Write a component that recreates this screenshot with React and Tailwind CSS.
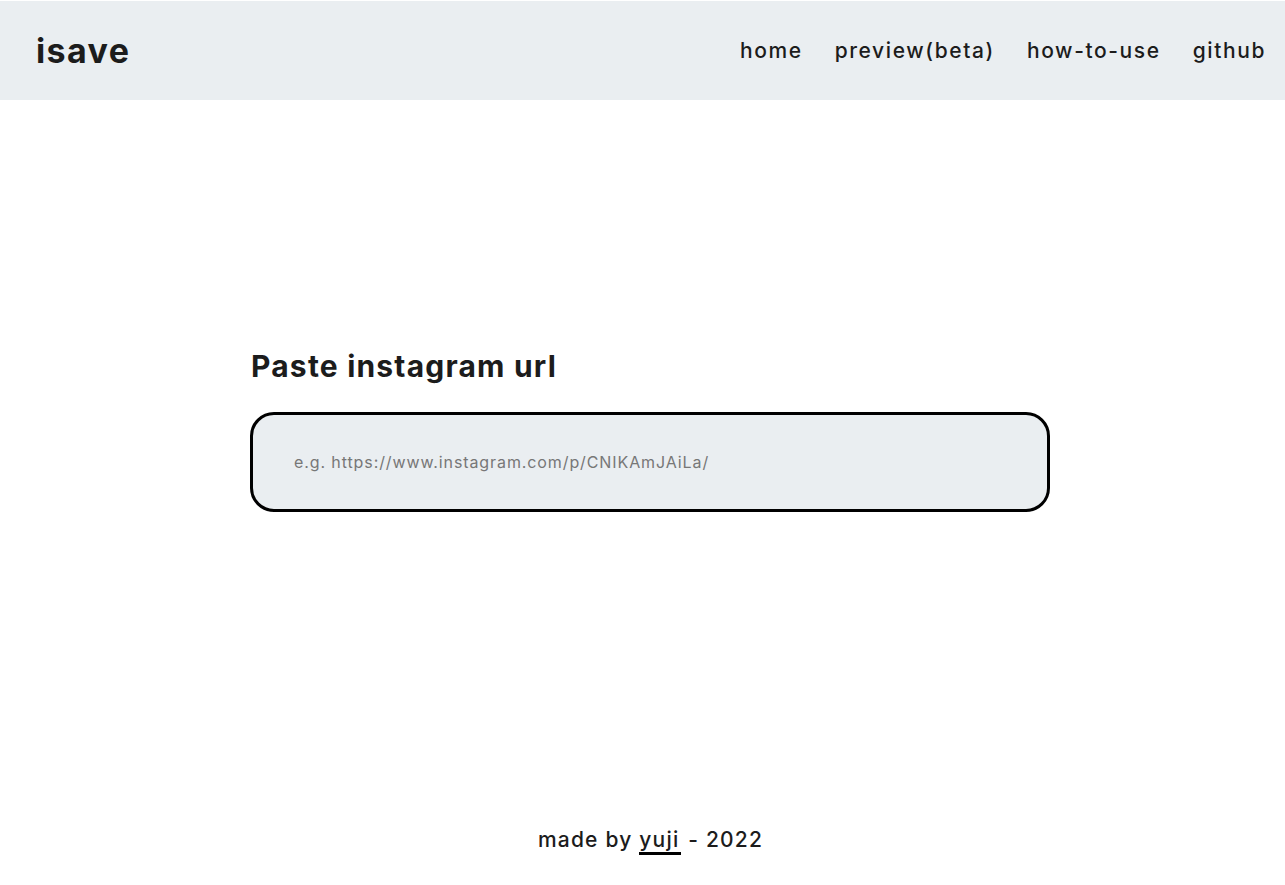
export default function App() {
  return (
    <div className="min-h-screen flex flex-col bg-white text-[#1c1c1c]" style={{ fontFamily: 'Inter, "Noto Sans", sans-serif' }}>
      {/* Header */}
      <header className="mt-[1px] h-[99px] bg-[#eaeef1] flex items-center justify-between pl-[36px] pr-[19px]">
        <a href="#" className="text-[34px] font-bold tracking-[1.4px] leading-none">isave</a>
        <nav className="flex items-center gap-[32px] text-[21px] font-medium tracking-[1.6px]">
          <a href="#">home</a>
          <a href="#">preview(beta)</a>
          <a href="#">how-to-use</a>
          <a href="#">github</a>
        </nav>
      </header>

      {/* Main */}
      <main className="flex-1 flex flex-col items-center pt-[248px] pl-[15px]">
        <div className="w-[800px]">
          <h1 className="text-[30px] font-bold leading-[36px] tracking-[1.2px] ml-[1px]">Paste instagram url</h1>
          <input
            type="text"
            autoFocus
            placeholder="e.g. https://www.instagram.com/p/CNIKAmJAiLa/"
            className="mt-[28px] w-full h-[100px] rounded-[24px] border-[3px] border-black bg-[#eaeef1] pl-[41px] text-[16px] tracking-[0.9px] outline-none placeholder:text-[#777]"
          />
        </div>
      </main>

      {/* Footer */}
      <footer className="pb-[30px] flex justify-center text-[21px] font-medium tracking-[1.2px]">
        <p className="ml-[16px]">
          made by <a href="#" className="border-b-[3px] border-black pr-[2px]">yuji</a> - 2022
        </p>
      </footer>
    </div>
  );
}
